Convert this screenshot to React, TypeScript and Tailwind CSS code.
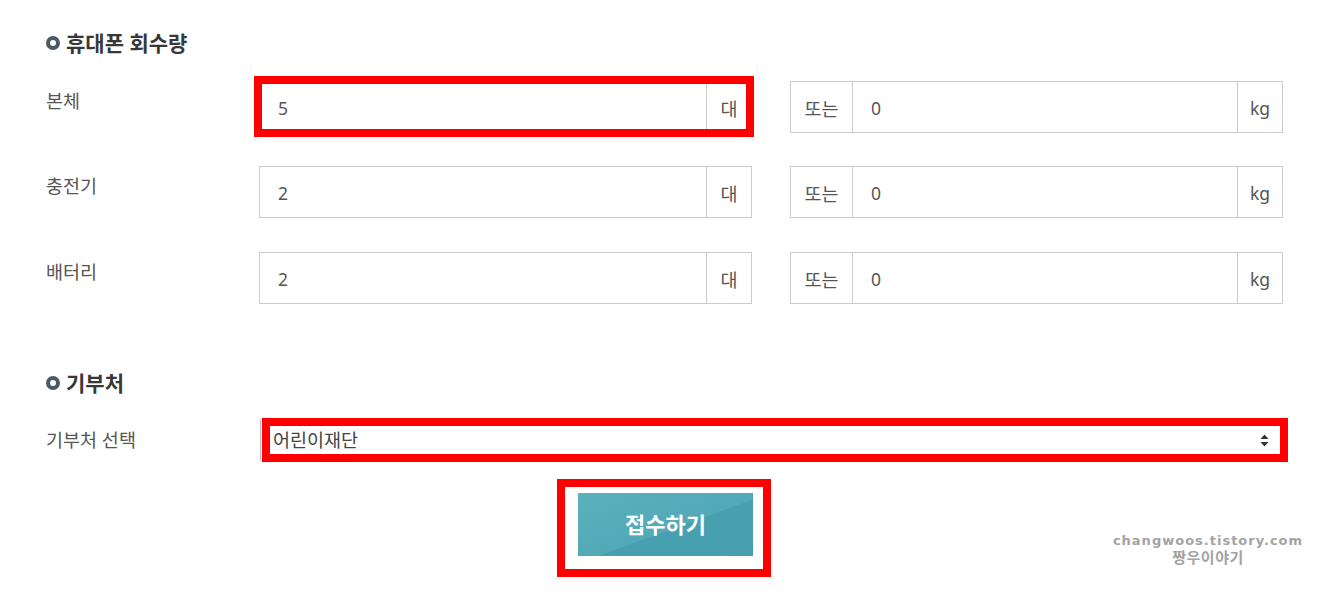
import React from "react";

const font = { fontFamily: '"Noto Sans", "Noto Sans CJK KR", sans-serif' };

function SectionTitle({ text }: { text: string }) {
  return (
    <div className="flex items-center h-[28px]">
      <span className="w-[14px] h-[14px] rounded-full border-[4px] border-[#4b5a66] box-border" />
      <span className="ml-[6px] text-[21px] leading-[28px] font-bold text-[#383838]">{text}</span>
    </div>
  );
}

function Group({ value, unit, prefix, highlight }: { value: string; unit: string; prefix?: string; highlight?: boolean }) {
  return (
    <div className="relative flex w-[493px] h-[52px] border border-[#cccccc] bg-white box-border">
      {prefix && (
        <div className="w-[62px] shrink-0 flex items-center justify-center pt-[3px] border-r border-[#cccccc] text-[18.5px] text-[#555]">
          {prefix}
        </div>
      )}
      <div className="flex-1 flex items-center pt-[3px] text-[17.5px] text-[#555] pl-[18px]">{value}</div>
      <div
        className={`w-[45px] shrink-0 flex items-center justify-center pt-[3px] border-l border-[#cccccc] text-[#555] ${
          unit === "kg" ? "text-[17.5px]" : "text-[18.5px]"
        }`}
      >
        {unit}
      </div>
      {highlight && (
        <div className="absolute left-[-6px] top-[-6px] right-[-3px] bottom-[-5px] border-[8px] border-[#ff0000] pointer-events-none" />
      )}
    </div>
  );
}

function Row({ label, value, highlight }: { label: string; value: string; highlight?: boolean }) {
  return (
    <div className="flex">
      <div className="w-[213px] shrink-0 pt-[7px] text-[18.5px] leading-[26px] text-[#555]">{label}</div>
      <Group value={value} unit="대" highlight={highlight} />
      <div className="w-[38px] shrink-0" />
      <Group value="0" unit="kg" prefix="또는" />
    </div>
  );
}

export default function App() {
  return (
    <div className="relative w-[1337px] h-[606px] bg-white overflow-hidden" style={font}>
      <div className="pl-[46px] pt-[29px]">
        <SectionTitle text="휴대폰 회수량" />
        <div className="mt-[24px] flex flex-col">
          <Row label="본체" value="5" highlight />
          <div className="h-[33px]" />
          <Row label="충전기" value="2" />
          <div className="h-[34px]" />
          <Row label="배터리" value="2" />
        </div>
        <div className="mt-[65px]">
          <SectionTitle text="기부처" />
        </div>
        <div className="mt-[21px] flex items-center">
          <div className="w-[214px] shrink-0 text-[18.5px] leading-[26px] text-[#555]">기부처 선택</div>
          <div className="relative w-[1023px] h-[44px] border border-[#bbbbbb] rounded-[3px] bg-white flex items-center pl-[12px] box-border">
            <span className="text-[18.5px] text-[#444]">어린이재단</span>
            <svg className="absolute right-[13px] top-[15px]" width="9" height="13" viewBox="0 0 9 13">
              <path d="M4.5 0.5 L8.5 5 L0.5 5 Z" fill="#333" />
              <path d="M4.5 12.5 L8.5 8 L0.5 8 Z" fill="#333" />
            </svg>
            <div className="absolute left-[1px] top-[-1px] right-[-6px] bottom-[-1px] border-[8px] border-[#ff0000] pointer-events-none" />
          </div>
        </div>
      </div>
      <div className="mt-[31px] flex justify-center pr-[6px]">
        <div className="relative">
          <button
            className="w-[175px] h-[63px] text-white text-[22px] font-bold bg-[linear-gradient(160deg,#5cb0bd_0%,#52a9b7_55%,#46a0b0_56%,#479fae_100%)]"
            style={font}
          >
            접수하기
          </button>
          <div className="absolute left-[-21px] top-[-14px] right-[-18px] bottom-[-21px] border-[8px] border-[#ff0000] pointer-events-none" />
        </div>
      </div>
      <div
        className="absolute left-[1110px] top-[532px] w-[196px] flex flex-col items-center text-[#a3a3a3] font-bold"
        style={{ fontFamily: '"DejaVu Sans", "Noto Sans CJK KR", sans-serif' }}
      >
        <span className="text-[13px] leading-[17px] tracking-[1px]">changwoos.tistory.com</span>
        <span className="text-[15px] leading-[16px] tracking-[0.5px]" style={{ fontFamily: '"Noto Sans CJK KR", sans-serif' }}>
          짱우이야기
        </span>
      </div>
    </div>
  );
}
